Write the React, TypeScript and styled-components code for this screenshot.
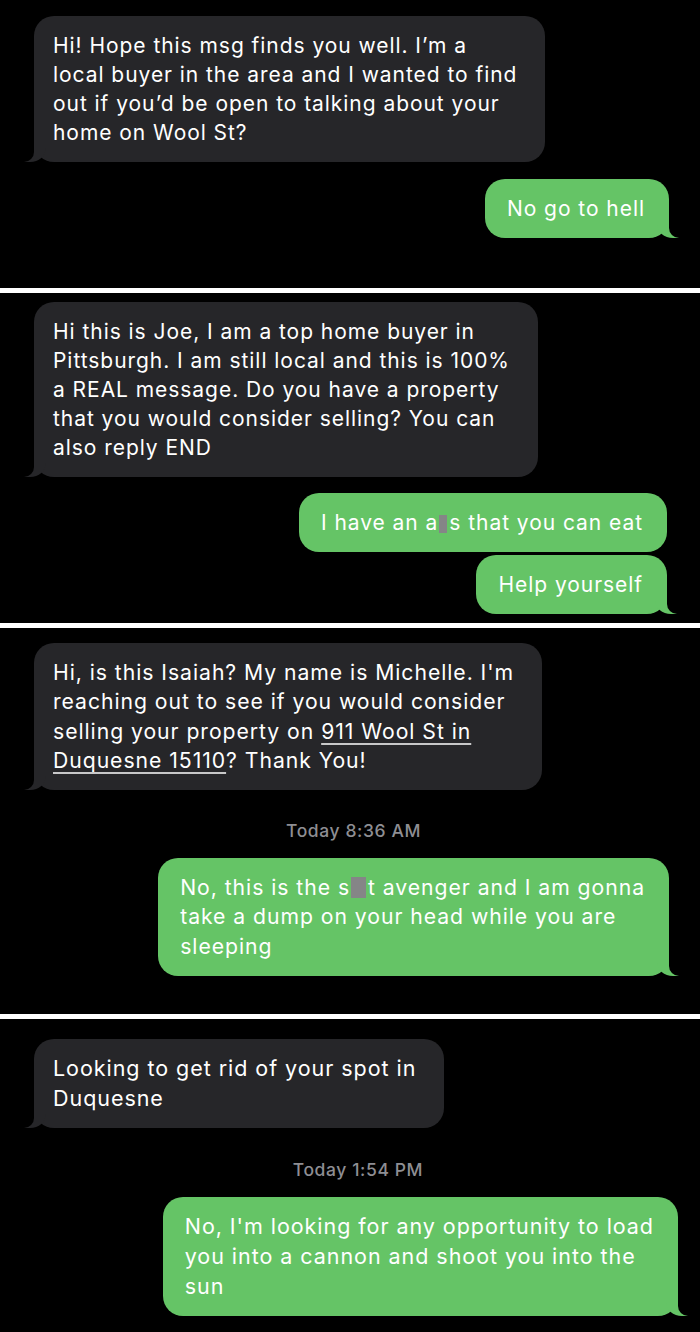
import React from "react";
import styled, { createGlobalStyle, css } from "styled-components";

const GlobalStyle = createGlobalStyle`
  html, body { margin: 0; padding: 0; background: #000; }
  #root { background: #000; }
`;

type Side = "in" | "out";

const Page = styled.div`
  width: 700px;
  background: #000;
  display: flex;
  flex-direction: column;
  font-family: Inter, "Liberation Sans", Arial, sans-serif;
`;

const Panel = styled.section<{ $top: number; $bottom: number; $right: number; $fs?: number }>`
  display: flex;
  flex-direction: column;
  padding: ${(p) => p.$top}px ${(p) => p.$right}px ${(p) => p.$bottom}px 34px;
  --fs: ${(p) => p.$fs ?? 21}px;
  --lh: ${(p) => ((p.$fs ?? 21) * 29) / 21}px;
`;

const Divider = styled.div`
  height: 5px;
  background: #ffffff;
`;

const Row = styled.div<{ $side: Side; $gap?: number }>`
  display: flex;
  justify-content: ${(p) => (p.$side === "out" ? "flex-end" : "flex-start")};
  margin-top: ${(p) => p.$gap ?? 0}px;
`;

const inColor = "#262629";
const outColor = "#65c466";

const tailIn = css`
  &::before {
    content: "";
    position: absolute;
    bottom: 0;
    left: -10px;
    width: 22px;
    height: 22px;
    background: ${inColor};
    border-bottom-right-radius: 16px 14px;
  }
  &::after {
    content: "";
    position: absolute;
    bottom: 0;
    left: -12px;
    width: 12px;
    height: 23px;
    background: #000;
    border-bottom-right-radius: 10px;
  }
`;

const tailOut = css`
  &::before {
    content: "";
    position: absolute;
    bottom: 0;
    right: -10px;
    width: 22px;
    height: 22px;
    background: ${outColor};
    border-bottom-left-radius: 16px 14px;
  }
  &::after {
    content: "";
    position: absolute;
    bottom: 0;
    right: -12px;
    width: 12px;
    height: 23px;
    background: #000;
    border-bottom-left-radius: 10px;
  }
`;

const Bubble = styled.div<{ $side: Side; $tail?: boolean }>`
  position: relative;
  box-sizing: border-box;
  white-space: nowrap;
  border-radius: 20px;
  font-size: var(--fs);
  letter-spacing: 0.95px;
  line-height: var(--lh);
  color: #fff;
  background: ${(p) => (p.$side === "out" ? outColor : inColor)};
  padding: ${(p) => (p.$side === "out" ? "15px 24px 15px 22px" : "15px 28px 15px 19px")};
  ${(p) => (p.$tail ? (p.$side === "out" ? tailOut : tailIn) : "")}
`;

const Stamp = styled.div<{ $gap: number }>`
  margin-top: ${(p) => p.$gap}px;
  text-align: center;
  color: #8e8e93;
  font-size: 17.5px;
  letter-spacing: 0.6px;
  line-height: 28px;
  font-weight: 500;
  padding-left: 4px;
`;

const Censor = styled.span<{ $w: number; $h: number }>`
  display: inline-block;
  width: ${(p) => p.$w}px;
  height: ${(p) => p.$h}px;
  margin: 0 2px 0 1px;
  vertical-align: -3px;
  background: #858587;
`;

const Detected = styled.span`
  text-decoration: underline;
  text-decoration-thickness: 1.5px;
  text-underline-offset: 4px;
  text-decoration-color: rgba(255, 255, 255, 0.75);
`;

export default function App() {
  return (
    <Page>
      <GlobalStyle />
      <Panel $top={16} $bottom={50} $right={31}>
        <Row $side="in">
          <Bubble $side="in" $tail>
            Hi! Hope this msg finds you well. I’m a
            <br />
            local buyer in the area and I wanted to find
            <br />
            out if you’d be open to talking about your
            <br />
            home on Wool St?
          </Bubble>
        </Row>
        <Row $side="out" $gap={17}>
          <Bubble $side="out" $tail>
            No go to hell
          </Bubble>
        </Row>
      </Panel>
      <Divider />
      <Panel $top={9} $bottom={9} $right={33}>
        <Row $side="in">
          <Bubble $side="in" $tail>
            Hi this is Joe, I am a top home buyer in
            <br />
            Pittsburgh. I am still local and this is 100%
            <br />
            a REAL message. Do you have a property
            <br />
            that you would consider selling? You can
            <br />
            also reply END
          </Bubble>
        </Row>
        <Row $side="out" $gap={16}>
          <Bubble $side="out">
            I have an a<Censor $w={8} $h={18} />s that you can eat
          </Bubble>
        </Row>
        <Row $side="out" $gap={3}>
          <Bubble $side="out" $tail>
            Help yourself
          </Bubble>
        </Row>
      </Panel>
      <Divider />
      <Panel $top={15} $bottom={38} $right={31} $fs={21.2}>
        <Row $side="in">
          <Bubble $side="in" $tail>
            Hi, is this Isaiah? My name is Michelle. I'm
            <br />
            reaching out to see if you would consider
            <br />
            selling your property on <Detected>911 Wool St in</Detected>
            <br />
            <Detected>Duquesne 15110</Detected>? Thank You!
          </Bubble>
        </Row>
        <Stamp $gap={27}>Today 8:36 AM</Stamp>
        <Row $side="out" $gap={13}>
          <Bubble $side="out" $tail>
            No, this is the s<Censor $w={15} $h={21} />t avenger and I am gonna
            <br />
            take a dump on your head while you are
            <br />
            sleeping
          </Bubble>
        </Row>
      </Panel>
      <Divider />
      <Panel $top={20} $bottom={15} $right={22} $fs={21.5}>
        <Row $side="in">
          <Bubble $side="in" $tail>
            Looking to get rid of your spot in
            <br />
            Duquesne
          </Bubble>
        </Row>
        <Stamp $gap={28}>Today 1:54 PM</Stamp>
        <Row $side="out" $gap={13}>
          <Bubble $side="out" $tail>
            No, I'm looking for any opportunity to load
            <br />
            you into a cannon and shoot you into the
            <br />
            sun
          </Bubble>
        </Row>
      </Panel>
    </Page>
  );
}
